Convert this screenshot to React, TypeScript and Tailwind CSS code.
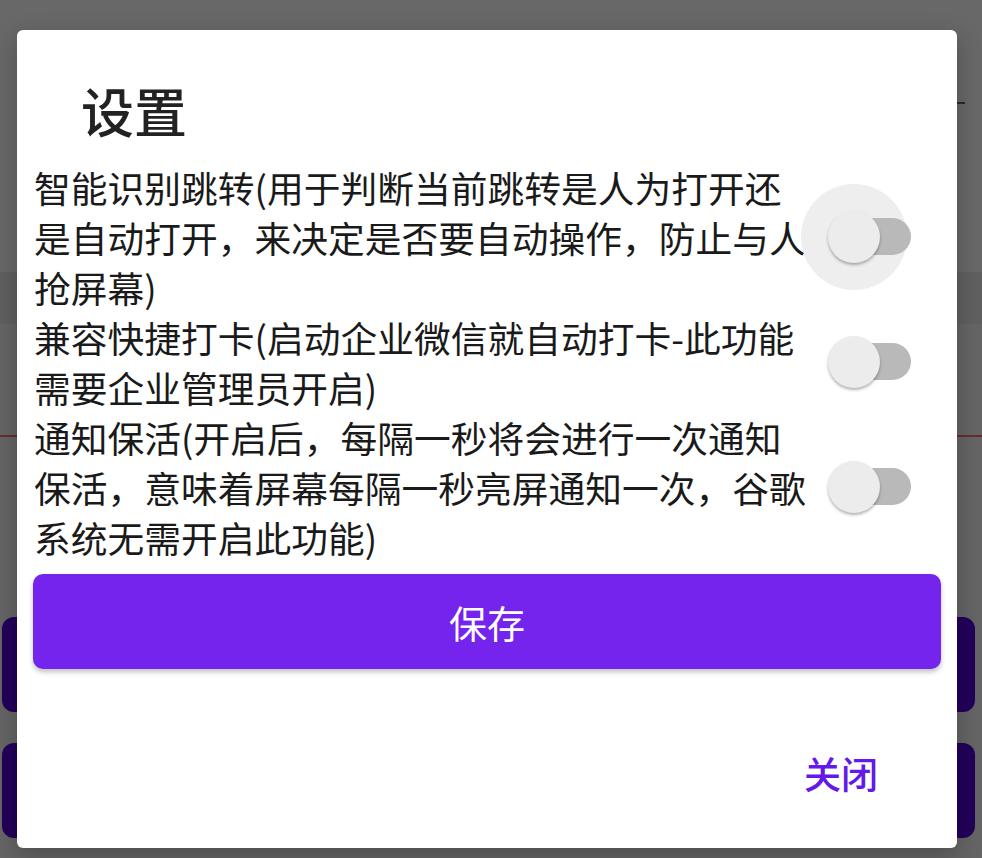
import React from "react";

const FONT = { fontFamily: '"Noto Sans CJK SC", "Noto Sans", sans-serif' };

function Switch({ halo }: { halo?: boolean }) {
  return (
    <div className="relative w-[110px] h-[106px] shrink-0 flex items-center">
      {halo && (
        <div className="absolute left-0 top-0 w-[106px] h-[106px] rounded-full bg-[#eeeeee]" />
      )}
      <div className="absolute left-[35px] top-[34px] w-[75px] h-[37px] rounded-full bg-[#b9b9b9]" />
      <div className="absolute left-[27px] top-[27px] w-[52px] h-[52px] rounded-full bg-[#ececec] shadow-[0_2px_3px_rgba(0,0,0,0.3)]" />
    </div>
  );
}

function Row({ lines, halo }: { lines: string[]; halo?: boolean }) {
  return (
    <div className="flex items-center pr-[30px]">
      <div className="flex-1 min-w-0 pl-[1px] text-[36.75px] leading-[50px] text-[#1a1a1a]">
        {lines.map((l, i) => (
          <div key={i} className="whitespace-nowrap">
            {l}
          </div>
        ))}
      </div>
      <div className="-my-[30px]">
        <Switch halo={halo} />
      </div>
    </div>
  );
}

export default function App() {
  return (
    <div className="relative w-[982px] h-[858px] overflow-hidden bg-[#656565]" style={FONT}>
      {/* underlying page (dimmed) */}
      <div className="flex flex-col">
        <div className="h-[272px] bg-[#686868] flex justify-end items-start pt-[102px] pr-[17px]">
          <div className="w-[8px] h-[2px] bg-[#2a2a2a]" />
        </div>
        <div className="h-[52px] bg-[#606060]" />
        <div className="h-[111px]" />
        <div className="h-[2px] bg-[#6b2a30]" />
        <div className="h-[180px]" />
        <div className="h-[95px] ml-[2px] mr-[7px] rounded-[12px] bg-[#22005a]" />
        <div className="h-[31px]" />
        <div className="h-[95px] ml-[2px] mr-[7px] rounded-[12px] bg-[#22005a]" />
      </div>

      {/* dialog */}
      <div className="absolute left-[17px] top-[30px] w-[940px] h-[818px] bg-white rounded-[6px] flex flex-col px-[16px] shadow-[0_8px_24px_rgba(0,0,0,0.25)]">
        <div className="pt-[54px] pl-[48px] text-[53px] leading-[52px] font-medium text-[#222222]">
          设置
        </div>
        <div className="mt-[26px] flex flex-col">
          <Row
            halo
            lines={[
              "智能识别跳转(用于判断当前跳转是人为打开还",
              "是自动打开，来决定是否要自动操作，防止与人",
              "抢屏幕)",
            ]}
          />
          <Row
            lines={[
              "兼容快捷打卡(启动企业微信就自动打卡-此功能",
              "需要企业管理员开启)",
            ]}
          />
          <Row
            lines={[
              "通知保活(开启后，每隔一秒将会进行一次通知",
              "保活，意味着屏幕每隔一秒亮屏通知一次，谷歌",
              "系统无需开启此功能)",
            ]}
          />
        </div>
        <button className="mt-[12px] h-[95px] w-full rounded-[10px] bg-[#7524ee] text-white text-[38px] leading-[50px] shadow-[0_3px_5px_rgba(0,0,0,0.25)] flex items-center justify-center">
          保存
        </button>
        <div className="mt-[79px] flex justify-end pr-[63px]">
          <span className="text-[37px] leading-[50px] text-[#6419e6] font-medium">关闭</span>
        </div>
      </div>
    </div>
  );
}
